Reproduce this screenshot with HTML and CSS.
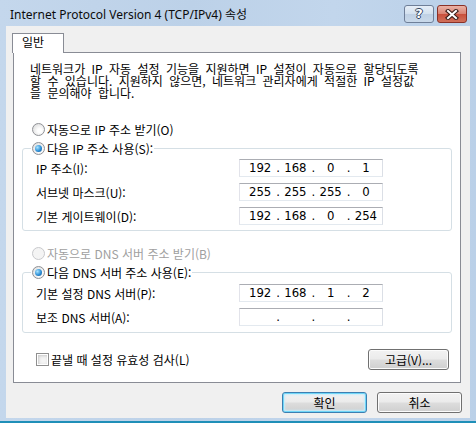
FILE: index.html
```html
<!DOCTYPE html>
<html lang="ko">
<head>
    <meta charset="UTF-8">
    <title>Internet Protocol Version 4 (TCP/IPv4) 속성</title>
    <link rel="stylesheet" href="styles.css">
</head>
<body>
    <div class="window">
        <div class="titlebar">
            <span class="title">Internet Protocol Version 4 (TCP/IPv4) 속성</span>
            <div class="caption-buttons">
                <span class="cap-btn help">?</span>
                <span class="cap-btn close">
                    <svg width="14" height="11" viewBox="0 0 14 11">
                        <path d="M3 2 L11 9 M11 2 L3 9" stroke="#3a1d19" stroke-width="4.2" stroke-linecap="square" fill="none"/>
                        <path d="M3 2 L11 9 M11 2 L3 9" stroke="#ffffff" stroke-width="2" stroke-linecap="square" fill="none"/>
                    </svg>
                </span>
            </div>
        </div>

        <div class="client">
            <div class="tabs">
                <span class="tab active">일반</span>
            </div>
            <div class="tab-panel">
                <p class="desc">네트워크가 IP 자동 설정 기능을 지원하면 IP 설정이 자동으로 할당되도록<br>할 수 있습니다. 지원하지 않으면, 네트워크 관리자에게 적절한 IP 설정값<br>을 문의해야 합니다.</p>

                <label class="option top-option"><span class="radio"></span>자동으로 IP 주소 받기(O)</label>

                <fieldset class="group">
                    <legend class="option"><span class="radio checked"></span>다음 IP 주소 사용(S):</legend>
                    <div class="field-row">
                        <span class="field-label">IP 주소(I):</span>
                        <div class="ipbox"><span>192</span><i>.</i><span>168</span><i>.</i><span>0</span><i>.</i><span>1</span></div>
                    </div>
                    <div class="field-row">
                        <span class="field-label">서브넷 마스크(U):</span>
                        <div class="ipbox"><span>255</span><i>.</i><span>255</span><i>.</i><span>255</span><i>.</i><span>0</span></div>
                    </div>
                    <div class="field-row">
                        <span class="field-label">기본 게이트웨이(D):</span>
                        <div class="ipbox"><span>192</span><i>.</i><span>168</span><i>.</i><span>0</span><i>.</i><span>254</span></div>
                    </div>
                </fieldset>

                <label class="option top-option dns-auto disabled"><span class="radio"></span>자동으로 DNS 서버 주소 받기(B)</label>

                <fieldset class="group group-dns">
                    <legend class="option"><span class="radio checked"></span>다음 DNS 서버 주소 사용(E):</legend>
                    <div class="field-row">
                        <span class="field-label">기본 설정 DNS 서버(P):</span>
                        <div class="ipbox"><span>192</span><i>.</i><span>168</span><i>.</i><span>1</span><i>.</i><span>2</span></div>
                    </div>
                    <div class="field-row">
                        <span class="field-label">보조 DNS 서버(A):</span>
                        <div class="ipbox"><span></span><i>.</i><span></span><i>.</i><span></span><i>.</i><span></span></div>
                    </div>
                </fieldset>

                <div class="panel-footer">
                    <label class="option"><span class="checkbox"></span>끝낼 때 설정 유효성 검사(L)</label>
                    <button class="btn advanced">고급(V)...</button>
                </div>
            </div>

            <div class="dialog-buttons">
                <button class="btn default">확인</button>
                <button class="btn">취소</button>
            </div>
        </div>
    </div>
</body>
</html>
```

FILE: styles.css
```css
body {
    margin: 0;
    background-color: #ffffff;
    font-family: "Noto Sans CJK KR", "Noto Sans", sans-serif;
    font-size: 12px;
    color: #000;
}

.window {
    width: 476px;
    height: 421px;
    display: flex;
    flex-direction: column;
    background: linear-gradient(to right, #c4d7ec 0%, #bcd1e8 40%, #c2d6ec 70%, #bad0e8 100%);
    border-bottom: 2px solid #1f8fb8;
    box-shadow: 0 1px 0 #173a57;
}

.titlebar {
    height: 26px;
    display: flex;
    justify-content: space-between;
    align-items: flex-start;
}

.title {
    font-family: "Noto Sans", "Noto Sans CJK KR", sans-serif;
    font-size: 12px;
    line-height: 16px;
    margin: 7px 0 0 10px;
    color: #0b0b0b;
}

.caption-buttons {
    display: flex;
    gap: 3px;
    margin: 5px 9px 0 0;
}

.cap-btn {
    width: 30px;
    height: 18px;
    box-sizing: border-box;
    border-radius: 3px;
    display: flex;
    justify-content: center;
    align-items: center;
}

.help {
    border: 1px solid #6f7f98;
    background: linear-gradient(#e6eef7 0%, #d4e1ef 48%, #bfd0e4 52%, #c9d9ea 100%);
    color: #fff;
    font-family: "DejaVu Sans", sans-serif;
    font-weight: bold;
    font-size: 13px;
    line-height: 16px;
    text-shadow: 1px 0 0 #33455f, -1px 0 0 #33455f, 0 1px 0 #33455f, 0 -1px 0 #33455f;
}

.close {
    border: 1px solid #8a3127;
    background: linear-gradient(#eab2a6 0%, #d98373 48%, #c9503c 52%, #d0705a 100%);
}

.client {
    height: 392px;
    margin: 0 6px;
    box-sizing: border-box;
    padding: 7px 8px 0 6px;
    background-color: #f0f0f0;
}

.tabs {
    display: flex;
}

.tab {
    position: relative;
    z-index: 1;
    width: 52px;
    height: 20px;
    box-sizing: border-box;
    margin-bottom: -1px;
    padding: 1px 0 0 9px;
    line-height: 14px;
    border: 1px solid #898c95;
    border-bottom: none;
    background-color: #ffffff;
}

.tab-panel {
    width: 448px;
    height: 331px;
    margin-left: 1px;
    box-sizing: border-box;
    border: 1px solid #898c95;
    background-color: #ffffff;
    display: flex;
    flex-direction: column;
}

.desc {
    margin: 10px 0 0 16px;
    line-height: 12px;
    word-spacing: 3px;
    white-space: nowrap;
}

.option {
    display: flex;
    align-items: center;
    gap: 2px;
    height: 16px;
    white-space: nowrap;
}

.top-option {
    margin: 22px 0 0 18px;
}

.dns-auto {
    margin-top: 14px;
}

.disabled {
    color: #a0a0a0;
}

.radio {
    width: 13px;
    height: 13px;
    box-sizing: border-box;
    border-radius: 50%;
    border: 1px solid #8f9196;
    background: radial-gradient(circle at 60% 60%, #ffffff 20%, #e2e2e2 75%);
    display: flex;
    justify-content: center;
    align-items: center;
}

.radio.checked::after {
    content: "";
    width: 7px;
    height: 7px;
    border-radius: 50%;
    background: radial-gradient(circle at 35% 35%, #a9e4ff 0%, #2d8fd6 55%, #124e8c 100%);
}

.disabled .radio {
    border-color: #c8c9cc;
    background: #f4f4f4;
}

.checkbox {
    width: 13px;
    height: 13px;
    box-sizing: border-box;
    border: 1px solid #8f8f8f;
    background: #f4f4f4;
    box-shadow: inset 0 0 0 1px #ffffff, inset 1px 1px 3px 1px #c9c9c9;
}

.group {
    margin: 3px 8px 0 8px;
    padding: 3px 0 5px 0;
    border: 1px solid #d5dfe5;
    border-radius: 3px;
    min-width: 0;
    display: flex;
    flex-direction: column;
    gap: 6px;
}

.group legend {
    margin-left: 8px;
    padding: 0 1px;
}

.group-dns {
    padding: 4px 0 6px 0;
}

.field-row {
    display: grid;
    grid-template-columns: 216px 144px;
    align-items: center;
    height: 18px;
}

.field-label {
    padding-left: 13px;
    white-space: nowrap;
}

.ipbox {
    height: 18px;
    box-sizing: border-box;
    padding-left: 4px;
    border: 1px solid;
    border-color: #abadb3 #dbdfe6 #e3e9ef #e2e3ea;
    background-color: #ffffff;
    display: grid;
    grid-template-columns: 1fr 3px 1fr 3px 1fr 3px 1fr;
    align-items: center;
    font-family: "Liberation Sans Narrow", "DejaVu Sans Condensed", "Liberation Sans", sans-serif;
    font-size: 13px;
    line-height: 16px;
}

.ipbox span {
    text-align: center;
}

.ipbox i {
    font-style: normal;
    text-align: center;
}

.panel-footer {
    margin: 16px 11px 0 22px;
    height: 21px;
    display: flex;
    justify-content: space-between;
    align-items: center;
}

.btn {
    height: 21px;
    box-sizing: border-box;
    padding: 0;
    border: 1px solid #707070;
    border-radius: 3px;
    background: linear-gradient(#f2f2f2 0%, #ebebeb 48%, #dddddd 52%, #cfcfcf 100%);
    box-shadow: inset 0 0 0 1px #fcfcfc;
    font-family: "Noto Sans CJK KR", sans-serif;
    font-size: 12px;
    line-height: 18px;
    color: #000;
}

.advanced {
    width: 81px;
}

.dialog-buttons {
    display: flex;
    justify-content: flex-end;
    gap: 10px;
    margin-top: 9px;
}

.dialog-buttons .btn {
    width: 85px;
}

.btn.default {
    border-color: #3c7fb1;
    box-shadow: inset 0 0 0 1px #6fd6f8, inset 0 0 2px 2px #c8ecfa;
}
```
